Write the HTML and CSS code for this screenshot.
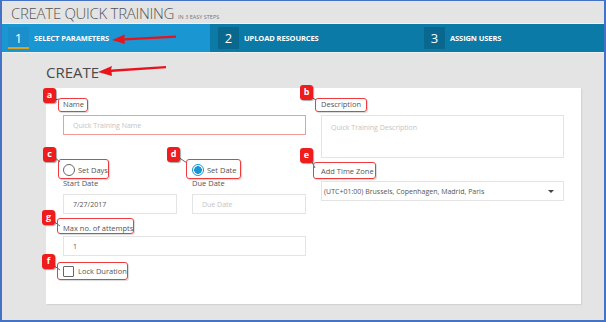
FILE: index.html
```html
<!DOCTYPE html>
<html lang="en">
<head>
  <meta charset="UTF-8">
  <title>Create Quick Training</title>
  <link rel="stylesheet" href="styles.css">
</head>
<body>
  <div class="screen">
    <div class="page-title">
      <h1>CREATE QUICK TRAINING</h1>
      <span class="subtitle">IN 3 EASY STEPS</span>
    </div>

    <div class="steps">
      <div class="step active"><span class="num">1</span><span class="step-label">SELECT PARAMETERS</span></div>
      <div class="step"><span class="num">2</span><span class="step-label">UPLOAD RESOURCES</span></div>
      <div class="step"><span class="num">3</span><span class="step-label">ASSIGN USERS</span></div>
    </div>

    <div class="content">
      <h2>CREATE</h2>
      <div class="card">
        <div class="col">
          <label class="field-label">Name</label>
          <input class="field invalid" type="text" placeholder="Quick Training Name">

          <div class="radio-row">
            <div class="half">
              <label class="radio"><span class="circle"></span>Set Days</label>
              <label class="field-label small">Start Date</label>
              <input class="field" type="text" value="7/27/2017">
            </div>
            <div class="half">
              <label class="radio"><span class="circle checked"></span>Set Date</label>
              <label class="field-label small">Due Date</label>
              <input class="field" type="text" placeholder="Due Date">
            </div>
          </div>

          <label class="field-label attempts">Max no. of attempts</label>
          <input class="field" type="text" value="1">

          <label class="check"><span class="box"></span>Lock Duration</label>
        </div>

        <div class="col">
          <label class="field-label">Description</label>
          <textarea class="field area" placeholder="Quick Training Description"></textarea>

          <label class="field-label zone">Add Time Zone</label>
          <div class="field select">
            <span>(UTC+01:00) Brussels, Copenhagen, Madrid, Paris</span>
            <span class="caret"></span>
          </div>
        </div>
      </div>
    </div>

    <!-- callouts drawn over the screenshot -->
    <div class="callouts">
      <svg class="arrows" width="606" height="322" viewBox="0 0 606 322">
        <g fill="#e8141b">
          <path d="M176 35.5 L124 38.2 L125 34.5 L112 40 L125 44 L124.5 40.6 L176 37.8 Z"/>
          <path d="M166 66 L111 69.5 L112 66 L98 72 L112 76 L111.5 72 L166 68.2 Z"/>
        </g>
        <g stroke="#444" stroke-width="0.8" fill="none">
          <line x1="54" y1="100" x2="59" y2="99"/>
          <line x1="311" y1="97" x2="316" y2="100"/>
          <line x1="54" y1="157" x2="60" y2="162"/>
          <line x1="178" y1="157" x2="187" y2="163"/>
          <line x1="311" y1="160" x2="315" y2="168"/>
          <line x1="53" y1="221" x2="60" y2="226"/>
          <line x1="53" y1="265" x2="60" y2="270"/>
        </g>
      </svg>

      <span class="badge b-a">a</span>
      <span class="badge b-b">b</span>
      <span class="badge b-c">c</span>
      <span class="badge b-d">d</span>
      <span class="badge b-e">e</span>
      <span class="badge b-g">g</span>
      <span class="badge b-f">f</span>

      <span class="ring r-a"></span>
      <span class="ring r-b"></span>
      <span class="ring r-c"></span>
      <span class="ring r-d"></span>
      <span class="ring r-e"></span>
      <span class="ring r-g"></span>
      <span class="ring r-f"></span>
    </div>
  </div>
</body>
</html>
```

FILE: styles.css
```css
* {
  box-sizing: border-box;
}

body {
  margin: 0;
  font-family: "Open Sans", "Liberation Sans", sans-serif;
  color: #555;
  background: #fff;
}

.screen {
  position: relative;
  width: 606px;
  height: 322px;
  border: 2px solid #4472c4;
  border-top-width: 1px;
  background: #e4e4e4;
  overflow: hidden;
}

.page-title {
  height: 23px;
  display: flex;
  align-items: baseline;
  padding: 2px 0 0 9px;
  border-bottom: 1px solid #f2f2f2;
}

.page-title h1 {
  margin: 0;
  font-size: 15px;
  font-weight: 300;
  color: #555;
  letter-spacing: -0.3px;
}

.subtitle {
  margin-left: 4px;
  font-size: 5.5px;
  color: #777;
}

.steps {
  display: flex;
  height: 29px;
  background: #0b7aa7;
  border-bottom: 1px solid #f0f0f0;
}

.step {
  display: flex;
  align-items: center;
  padding-left: 8px;
  color: #fff;
}

.step:nth-child(1) {
  flex: 0 0 208px;
  padding-left: 6px;
}

.step:nth-child(2) {
  flex: 0 0 206px;
}

.step:nth-child(3) {
  flex: 1;
}

.step.active {
  background: #1a96d3;
}

.num {
  width: 21px;
  height: 22px;
  display: flex;
  align-items: center;
  justify-content: center;
  background: #0a688f;
  font-size: 13px;
  margin-right: 5px;
}

.step.active .num {
  background: #1a8fcb;
  border-bottom: 2px solid #e0a21c;
  padding-top: 2px;
}

.step-label {
  font-size: 7.5px;
  font-weight: 700;
  letter-spacing: -0.1px;
}

.content {
  padding: 9px 23px 0 44px;
}

.content h2 {
  margin: 0 0 6px;
  font-size: 15px;
  font-weight: 400;
  color: #4a4a4a;
  line-height: 20px;
}

.card {
  height: 216px;
  background: #fff;
  box-shadow: 1px 1px 1px #d4d4d4;
  display: flex;
  gap: 15px;
  padding: 11px 17px 0 17px;
}

.col {
  flex: 1;
  display: flex;
  flex-direction: column;
  align-items: flex-start;
}

.field-label {
  font-size: 7.5px;
  line-height: 10px;
  color: #555;
  margin-bottom: 6px;
}

.field {
  width: 100%;
  height: 20px;
  border: 1px solid #e4e4e4;
  padding: 0 9px;
  font-family: inherit;
  font-size: 7px;
  color: #555;
  outline: none;
}

.field::placeholder {
  color: #c4c4c4;
}

.field.invalid {
  border-color: #f59a9a;
}

.area {
  height: 43px;
  padding-top: 7px;
  resize: none;
}

.radio-row {
  width: 100%;
  display: flex;
  gap: 15px;
  margin-top: 29px;
}

.half {
  flex: 1;
  display: flex;
  flex-direction: column;
  align-items: flex-start;
}

.radio,
.check {
  display: flex;
  align-items: center;
  font-size: 7.5px;
  color: #555;
  height: 12px;
}

.circle {
  width: 12px;
  height: 12px;
  border: 1px solid #666;
  border-radius: 50%;
  margin-right: 3px;
}

.circle.checked {
  border: 1.5px solid #1a96d3;
  background: radial-gradient(circle, #1a96d3 0 3.6px, #fff 4px);
}

.field-label.small {
  margin: 2px 0 6px;
}

.field-label.attempts {
  margin-top: 9px;
  margin-bottom: 3px;
}

.check {
  margin-top: 9px;
}

.box {
  width: 11px;
  height: 11px;
  border: 1px solid #666;
  border-radius: 1px;
  margin-right: 4px;
}

.field-label.zone {
  margin-top: 8px;
  margin-bottom: 5px;
}

.select {
  display: flex;
  align-items: center;
  justify-content: space-between;
  padding: 0 9px 0 2px;
}

.caret {
  border-left: 3px solid transparent;
  border-right: 3px solid transparent;
  border-top: 3px solid #444;
}

/* overlays */
.callouts {
  position: absolute;
  inset: -1px -2px -2px -2px;
  pointer-events: none;
}

.arrows {
  position: absolute;
  left: 0;
  top: 0;
}

.badge {
  position: absolute;
  width: 13px;
  height: 15px;
  border-radius: 3px;
  background: #ee1c1c;
  box-shadow: 1px 1px 1px rgba(0, 0, 0, 0.35);
  color: #fff;
  font-size: 9px;
  font-weight: 700;
  line-height: 14px;
  text-align: center;
}

.b-a { left: 43px; top: 88px; }
.b-b { left: 300px; top: 85px; }
.b-c { left: 43px; top: 147px; }
.b-d { left: 167px; top: 147px; }
.b-e { left: 300px; top: 148px; }
.b-g { left: 42px; top: 210px; }
.b-f { left: 42px; top: 254px; }

.ring {
  position: absolute;
  border: 1.5px solid #ef3b3b;
  border-radius: 3px;
  box-shadow: 1px 1px 1px rgba(0, 0, 0, 0.15);
}

.r-a { left: 58px; top: 98px; width: 30px; height: 14px; }
.r-b { left: 315px; top: 98px; width: 52px; height: 14px; }
.r-c { left: 58px; top: 159px; width: 51px; height: 20px; }
.r-d { left: 186px; top: 159px; width: 55px; height: 20px; }
.r-e { left: 313px; top: 162px; width: 63px; height: 17px; }
.r-g { left: 57px; top: 218px; width: 77px; height: 16px; }
.r-f { left: 57px; top: 262px; width: 71px; height: 18px; }
```
